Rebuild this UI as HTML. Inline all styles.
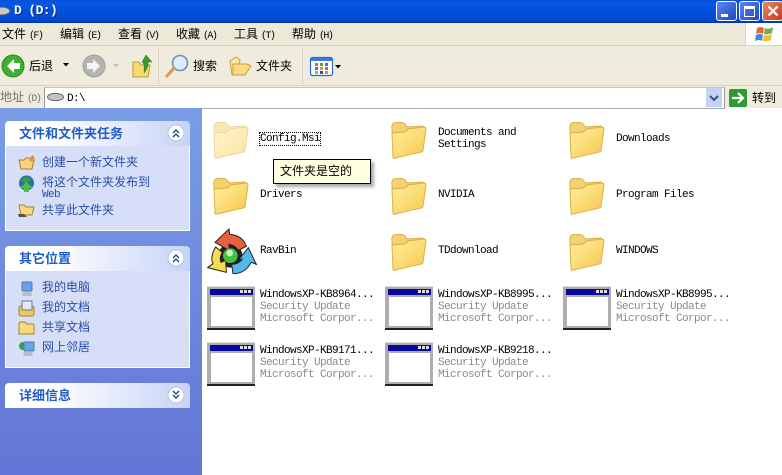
<!DOCTYPE html>
<html><head><meta charset="utf-8"><style>
html,body{margin:0;padding:0;width:782px;height:475px;overflow:hidden;background:#fff}
body{position:relative;font:12px/12px "WenQuanYi Zen Hei","Noto Sans CJK SC",sans-serif;color:#000}
.a{position:absolute;white-space:nowrap}
.m{font-family:"Liberation Mono","WenQuanYi Zen Hei",monospace;font-size:11px;letter-spacing:-.6px;line-height:12px;margin-top:1px}
.s{font-family:"Liberation Mono",monospace;font-size:10px;letter-spacing:-1.6px;margin-left:3px}
.g{color:#8a8a8a}
.l{color:#2a4ea6}
.h{position:absolute;left:5px;width:185px;height:25px;border-radius:4px 4px 0 0;background:linear-gradient(90deg,#fff 0,#fff 25%,#c6d3f7 100%)}
.h b{position:absolute;left:14px;top:5px;font-size:13px;line-height:14px;color:#215dc6}
.b{position:absolute;left:5px;width:183px;background:#d6dff7;border:1px solid #fff;border-top:0}
.c{position:absolute;left:162px;top:3px;width:18px;height:18px}
svg{position:absolute;overflow:visible}
.f{width:38px;height:38px}
</style></head><body>
<svg width="0" height="0" style="position:absolute"><defs>
<linearGradient id="fg" x1="0" y1="0" x2="1" y2="1"><stop offset="0" stop-color="#fff0a0"/><stop offset="1" stop-color="#f6c84c"/></linearGradient>
<symbol id="folder" viewBox="0 0 38 38"><path d="M3 8 Q2 2 7 1.5 L13 1.5 Q16 2 18 6 L34 5 L36 7 L34 26 L5 36Z" fill="#f3d274" stroke="#dcae44"/><path d="M3 12 L16 11 Q18 10 19 8 L35 6 Q37 6 37 8 L34 29 Q34 31 32 31 L6 37 Q4 38 4 36 Z" fill="url(#fg)" stroke="#dcae44"/></symbol>
<symbol id="win" viewBox="0 0 48 45"><rect x="0" y="1" width="48" height="44" fill="#aeaeae"/><rect x="0" y="1" width="48" height="1" fill="#ddd"/><rect x="0" y="43" width="48" height="2" fill="#222"/><rect x="3" y="4" width="43" height="6" fill="#0808a0"/><rect x="33" y="5" width="3" height="3" fill="#ddd"/><rect x="37" y="5" width="3" height="3" fill="#ddd"/><rect x="41" y="5" width="3" height="3" fill="#ddd"/><rect x="4" y="12" width="41" height="29" fill="#fff"/></symbol>
</defs></svg>

<!-- title bar -->
<div class="a" style="left:0;top:0;width:782px;height:23px;background:linear-gradient(180deg,#0a4fd8 0,#0458e6 15%,#0050dc 50%,#0348d0 85%,#0038a8 100%)"></div>
<svg style="left:-7px;top:4px" width="18" height="14"><ellipse cx="9" cy="7" rx="8" ry="4" fill="#c9c9c9" stroke="#555"/></svg>
<div class="a" style="left:14px;top:3px;color:#fff;font:bold 13px/16px 'Liberation Mono',monospace;text-shadow:1px 1px #0a2a80;letter-spacing:-.6px">D  (D:)</div>
<div class="a" style="left:716px;top:1px;width:19px;height:18px;border:1px solid #fff;border-radius:3px;background:linear-gradient(135deg,#5c86ec,#1e48c8)"><div class="a" style="left:4px;top:12px;width:7px;height:3px;background:#fff"></div></div>
<div class="a" style="left:739px;top:1px;width:19px;height:18px;border:1px solid #fff;border-radius:3px;background:linear-gradient(135deg,#5c86ec,#1e48c8)"><div class="a" style="left:4px;top:4px;width:9px;height:7px;border:1px solid #fff;border-top:3px solid #fff"></div></div>
<div class="a" style="left:762px;top:1px;width:19px;height:18px;border:1px solid #fff;border-radius:3px;background:linear-gradient(135deg,#e8886c,#c83c14)"><svg style="left:4px;top:3px" width="12" height="12"><path d="M1.5 1.5L10.5 10.5M10.5 1.5L1.5 10.5" stroke="#fff" stroke-width="2.2"/></svg></div>

<!-- menu -->
<div class="a" style="left:0;top:23px;width:782px;height:22px;background:#ece9d8;border-bottom:1px solid #d6d3c2"></div>
<div class="a" style="left:745px;top:23px;width:37px;height:22px;background:#fff;border-left:1px solid #d8d5c4"></div>
<svg style="left:755px;top:25px" width="20" height="18"><path d="M2 3 Q5 1 9 3 L8 9 Q5 7 1 9Z" fill="#e8663a"/><path d="M10 3 Q14 5 18 2 L17 8 Q13 10 9 9Z" fill="#70b040"/><path d="M1 10 Q5 8 8 10 L7 16 Q4 14 0 16Z" fill="#4a86d8"/><path d="M9 10 Q13 11 17 9 L16 15 Q12 17 8 16Z" fill="#f0c030"/></svg>
<div class="a" style="left:2px;top:28px">文件<span class="s">(F)</span></div>
<div class="a" style="left:60px;top:28px">编辑<span class="s">(E)</span></div>
<div class="a" style="left:118px;top:28px">查看<span class="s">(V)</span></div>
<div class="a" style="left:176px;top:28px">收藏<span class="s">(A)</span></div>
<div class="a" style="left:234px;top:28px">工具<span class="s">(T)</span></div>
<div class="a" style="left:292px;top:28px">帮助<span class="s">(H)</span></div>

<!-- toolbar -->
<div class="a" style="left:0;top:46px;width:782px;height:39px;background:#efecdd;border-bottom:1px solid #d6d3c2"></div>
<svg style="left:1px;top:54px" width="24" height="24"><circle cx="12" cy="12" r="11" fill="#3fae35" stroke="#2a8a28"/><path d="M13 5L6 12L13 19V15H19V9H13Z" fill="#fff"/></svg>
<div class="a" style="left:29px;top:60px">后退</div>
<svg style="left:63px;top:63px" width="6" height="4"><path d="M0 0H6L3 3.5Z" fill="#000"/></svg>
<svg style="left:82px;top:54px" width="24" height="24"><circle cx="12" cy="12" r="11" fill="#b4b4b0" stroke="#a0a09c"/><path d="M11 5L18 12L11 19V15H5V9H11Z" fill="#f4f4f0"/></svg>
<svg style="left:113px;top:64px" width="6" height="4"><path d="M0 0H6L3 3.5Z" fill="#c4c2b4"/></svg>
<svg style="left:131px;top:53px" width="22" height="26"><path d="M2 9H8L10 12H19L17 24H2Z" fill="#f6d874" stroke="#c09a30"/><path d="M13 20Q14 10 11 9L15 2L21 9L17 9Q18 14 13 20Z" fill="#3c9a2c" stroke="#2a7a20" stroke-width=".5"/></svg>
<div class="a" style="left:158px;top:48px;width:1px;height:36px;background:#d4d1c0"></div>
<svg style="left:164px;top:53px" width="26" height="26"><circle cx="16" cy="10" r="7.5" fill="#dceefc" stroke="#6a90b8" stroke-width="1.6"/><path d="M10 15L3 23" stroke="#d89a58" stroke-width="3.2" stroke-linecap="round"/></svg>
<div class="a" style="left:193px;top:60px">搜索</div>
<svg style="left:228px;top:55px" width="24" height="22"><path d="M2 6L8 2L12 5L10 18L4 20Z" fill="#fbe7a0" stroke="#c9a040"/><path d="M5 9H19L23 11L17 20H5Z" fill="#f9dc84" stroke="#c9a040"/></svg>
<div class="a" style="left:256px;top:60px">文件夹</div>
<div class="a" style="left:302px;top:48px;width:1px;height:36px;background:#d4d1c0"></div>
<svg style="left:310px;top:57px" width="24" height="19"><rect x=".5" y=".5" width="22" height="18" rx="2" fill="#fff" stroke="#2a6ad0" stroke-width="1.2"/><rect x="1" y="1" width="22" height="3" fill="#3a7ae0"/><g><rect x="5" y="6" width="3" height="3" fill="#d86040"/><rect x="10" y="6" width="3" height="3" fill="#5aa040"/><rect x="15" y="6" width="3" height="3" fill="#4070d0"/><rect x="5" y="10" width="3" height="3" fill="#4070d0"/><rect x="10" y="10" width="3" height="3" fill="#d0a030"/><rect x="15" y="10" width="3" height="3" fill="#d86040"/><rect x="5" y="14" width="3" height="3" fill="#d0a030"/><rect x="10" y="14" width="3" height="3" fill="#305090"/><rect x="15" y="14" width="3" height="3" fill="#c0a040"/></g></svg>
<svg style="left:335px;top:65px" width="6" height="4"><path d="M0 0H6L3 3.5Z" fill="#000"/></svg>

<!-- address -->
<div class="a" style="left:0;top:86px;width:782px;height:22px;background:#efecdd"></div>
<div class="a" style="left:0;top:91px;color:#77756a">地址<span class="s">(D)</span></div>
<div class="a" style="left:44px;top:87px;width:679px;height:20px;background:#fff;border:1px solid #9a9a9a;border-bottom:1px solid #a8b0b8;border-top:1px solid #c4c4c4"></div>
<svg style="left:47px;top:92px" width="17" height="10"><ellipse cx="8.5" cy="5" rx="8" ry="3.6" fill="#c4c4c4" stroke="#666"/></svg>
<div class="a m" style="left:67px;top:92px">D:\</div>
<div class="a" style="left:706px;top:88px;width:16px;height:19px;background:#c3d2f5;border:0"><svg style="left:3px;top:7px" width="10" height="7"><path d="M1 1L5 5L9 1" stroke="#3c4f7c" stroke-width="2" fill="none"/></svg></div>
<div class="a" style="left:729px;top:89px;width:18px;height:18px;background:#2f9a33;border-radius:2px"><svg style="left:2px;top:2px" width="14" height="14"><path d="M1 7H12M7 2L12 7L7 12" stroke="#fff" stroke-width="2.2" fill="none"/></svg></div>
<div class="a" style="left:752px;top:92px">转到</div>

<!-- sidebar -->
<div class="a" style="left:0;top:108px;width:202px;height:367px;background:linear-gradient(180deg,#7a9de6 0,#6375d6 100%)"></div>

<div class="h" style="top:121px"><b>文件和文件夹任务</b><svg class="c" viewBox="0 0 18 18"><circle cx="9" cy="9" r="8" fill="#fff" stroke="#b8c4e8"/><path d="M6 9L9 6L12 9M6 13L9 10L12 13" stroke="#1c3c8c" stroke-width="1.3" fill="none"/></svg></div>
<div class="b" style="top:146px;height:84px"></div>
<svg style="left:18px;top:155px" width="17" height="16"><path d="M1 5H6L8 3H13L15 1L16 5L14 14H3Z" fill="#f6d27a" stroke="#a88030"/><circle cx="14" cy="4" r="2.6" fill="#e89040"/></svg>
<div class="a l" style="left:42px;top:156px">创建一个新文件夹</div>
<svg style="left:18px;top:175px" width="17" height="18"><circle cx="8.5" cy="8" r="7.5" fill="#2a70b0"/><path d="M3 5Q8 0 13 4L8 9Z" fill="#3ca040"/><path d="M8.5 7L15 13H11V17H6V13H2Z" fill="#4ec040"/></svg>
<div class="a l" style="left:42px;top:176px">将这个文件夹发布到</div>
<div class="a m l" style="left:42px;top:188px">Web</div>
<svg style="left:18px;top:203px" width="17" height="15"><path d="M1 2H6L8 4H16L14 12H3Z" fill="#f6d880" stroke="#a88030"/><path d="M0 11H6L9 14H1Z" fill="#5a5040"/></svg>
<div class="a l" style="left:42px;top:204px">共享此文件夹</div>

<div class="h" style="top:246px"><b>其它位置</b><svg class="c" viewBox="0 0 18 18"><circle cx="9" cy="9" r="8" fill="#fff" stroke="#b8c4e8"/><path d="M6 9L9 6L12 9M6 13L9 10L12 13" stroke="#1c3c8c" stroke-width="1.3" fill="none"/></svg></div>
<div class="b" style="top:271px;height:96px"></div>
<svg style="left:19px;top:281px" width="15" height="16"><rect x="3" y="1" width="10" height="9" rx="1" fill="#6aa0e8" stroke="#5878a8"/><path d="M4 11H12L13 15H3Z" fill="#b8bcc8"/></svg>
<div class="a l" style="left:42px;top:281px">我的电脑</div>
<svg style="left:18px;top:300px" width="17" height="17"><rect x="1" y="6" width="15" height="10" rx="2" fill="#f0c860" stroke="#a88030"/><rect x="4" y="1" width="10" height="9" fill="#e4e8f0" stroke="#6878a0"/></svg>
<div class="a l" style="left:42px;top:301px">我的文档</div>
<svg style="left:18px;top:321px" width="17" height="15"><path d="M1 3Q1 1 3 1H7L9 3H14Q16 3 16 5V13H1Z" fill="#f8dc7c" stroke="#a88030"/></svg>
<div class="a l" style="left:42px;top:321px">共享文档</div>
<svg style="left:18px;top:340px" width="17" height="17"><circle cx="5" cy="6" r="4" fill="#30a050"/><rect x="6" y="2" width="10" height="9" rx="1" fill="#60a8e8" stroke="#5878a8"/><path d="M6 12H14L15 16H5Z" fill="#b8bcc8"/></svg>
<div class="a l" style="left:42px;top:341px">网上邻居</div>

<div class="h" style="top:383px"><b>详细信息</b><svg class="c" viewBox="0 0 18 18"><circle cx="9" cy="9" r="8" fill="#fff" stroke="#b8c4e8"/><path d="M6 5L9 8L12 5M6 9L9 12L12 9" stroke="#1c3c8c" stroke-width="1.3" fill="none"/></svg></div>

<!-- files -->
<svg class="f" style="left:211px;top:121px;opacity:.5"><use href="#folder"/></svg>
<div class="a" style="left:259px;top:132px;width:60px;height:12px;border:1px dotted #000"></div>
<div class="a m" style="left:260px;top:132px">Config.Msi</div>
<svg class="f" style="left:389px;top:121px"><use href="#folder"/></svg>
<div class="a m" style="left:438px;top:126px">Documents and</div>
<div class="a m" style="left:438px;top:138px">Settings</div>
<svg class="f" style="left:567px;top:121px"><use href="#folder"/></svg>
<div class="a m" style="left:616px;top:132px">Downloads</div>

<svg class="f" style="left:211px;top:177px"><use href="#folder"/></svg>
<div class="a m" style="left:260px;top:188px">Drivers</div>
<svg class="f" style="left:389px;top:177px"><use href="#folder"/></svg>
<div class="a m" style="left:438px;top:188px">NVIDIA</div>
<svg class="f" style="left:567px;top:177px"><use href="#folder"/></svg>
<div class="a m" style="left:616px;top:188px">Program Files</div>

<svg style="left:205px;top:225px" width="52" height="52" viewBox="0 0 156 156">
<circle cx="76" cy="92" r="36" fill="#222"/>
<path d="M30 52 L72 12 L74 28 Q112 30 124 64 L100 76 Q90 60 72 58 L72 76 Z" fill="#e8603c" stroke="#222" stroke-width="3"/>
<path d="M130 68 L154 118 L138 112 Q122 146 84 146 L80 118 Q102 118 112 102 L100 106 Z" fill="#55b8ec" stroke="#222" stroke-width="3"/>
<path d="M32 66 Q14 96 24 116 L8 128 L64 142 L62 106 L48 112 Q42 98 52 82 Z" fill="#f4dc50" stroke="#222" stroke-width="3"/>
<circle cx="76" cy="92" r="22" fill="#46c040"/><circle cx="74" cy="84" r="10" fill="#c8f0c0"/>
</svg>
<div class="a m" style="left:260px;top:244px">RavBin</div>
<svg class="f" style="left:389px;top:233px"><use href="#folder"/></svg>
<div class="a m" style="left:438px;top:244px">TDdownload</div>
<svg class="f" style="left:567px;top:233px"><use href="#folder"/></svg>
<div class="a m" style="left:616px;top:244px">WINDOWS</div>

<svg style="left:207px;top:285px" width="48" height="45"><use href="#win"/></svg>
<div class="a m" style="left:260px;top:288px">WindowsXP-KB8964...</div>
<div class="a m g" style="left:260px;top:300px">Security Update</div>
<div class="a m g" style="left:260px;top:312px">Microsoft Corpor...</div>
<svg style="left:385px;top:285px" width="48" height="45"><use href="#win"/></svg>
<div class="a m" style="left:438px;top:288px">WindowsXP-KB8995...</div>
<div class="a m g" style="left:438px;top:300px">Security Update</div>
<div class="a m g" style="left:438px;top:312px">Microsoft Corpor...</div>
<svg style="left:563px;top:285px" width="48" height="45"><use href="#win"/></svg>
<div class="a m" style="left:616px;top:288px">WindowsXP-KB8995...</div>
<div class="a m g" style="left:616px;top:300px">Security Update</div>
<div class="a m g" style="left:616px;top:312px">Microsoft Corpor...</div>

<svg style="left:207px;top:341px" width="48" height="45"><use href="#win"/></svg>
<div class="a m" style="left:260px;top:344px">WindowsXP-KB9171...</div>
<div class="a m g" style="left:260px;top:356px">Security Update</div>
<div class="a m g" style="left:260px;top:368px">Microsoft Corpor...</div>
<svg style="left:385px;top:341px" width="48" height="45"><use href="#win"/></svg>
<div class="a m" style="left:438px;top:344px">WindowsXP-KB9218...</div>
<div class="a m g" style="left:438px;top:356px">Security Update</div>
<div class="a m g" style="left:438px;top:368px">Microsoft Corpor...</div>

<!-- tooltip -->
<div class="a" style="left:273px;top:159px;width:96px;height:23px;background:#ffffe1;border:1px solid #000;box-shadow:3px 3px 3px #aaa"></div>
<div class="a" style="left:280px;top:165px">文件夹是空的</div>
</body></html>
